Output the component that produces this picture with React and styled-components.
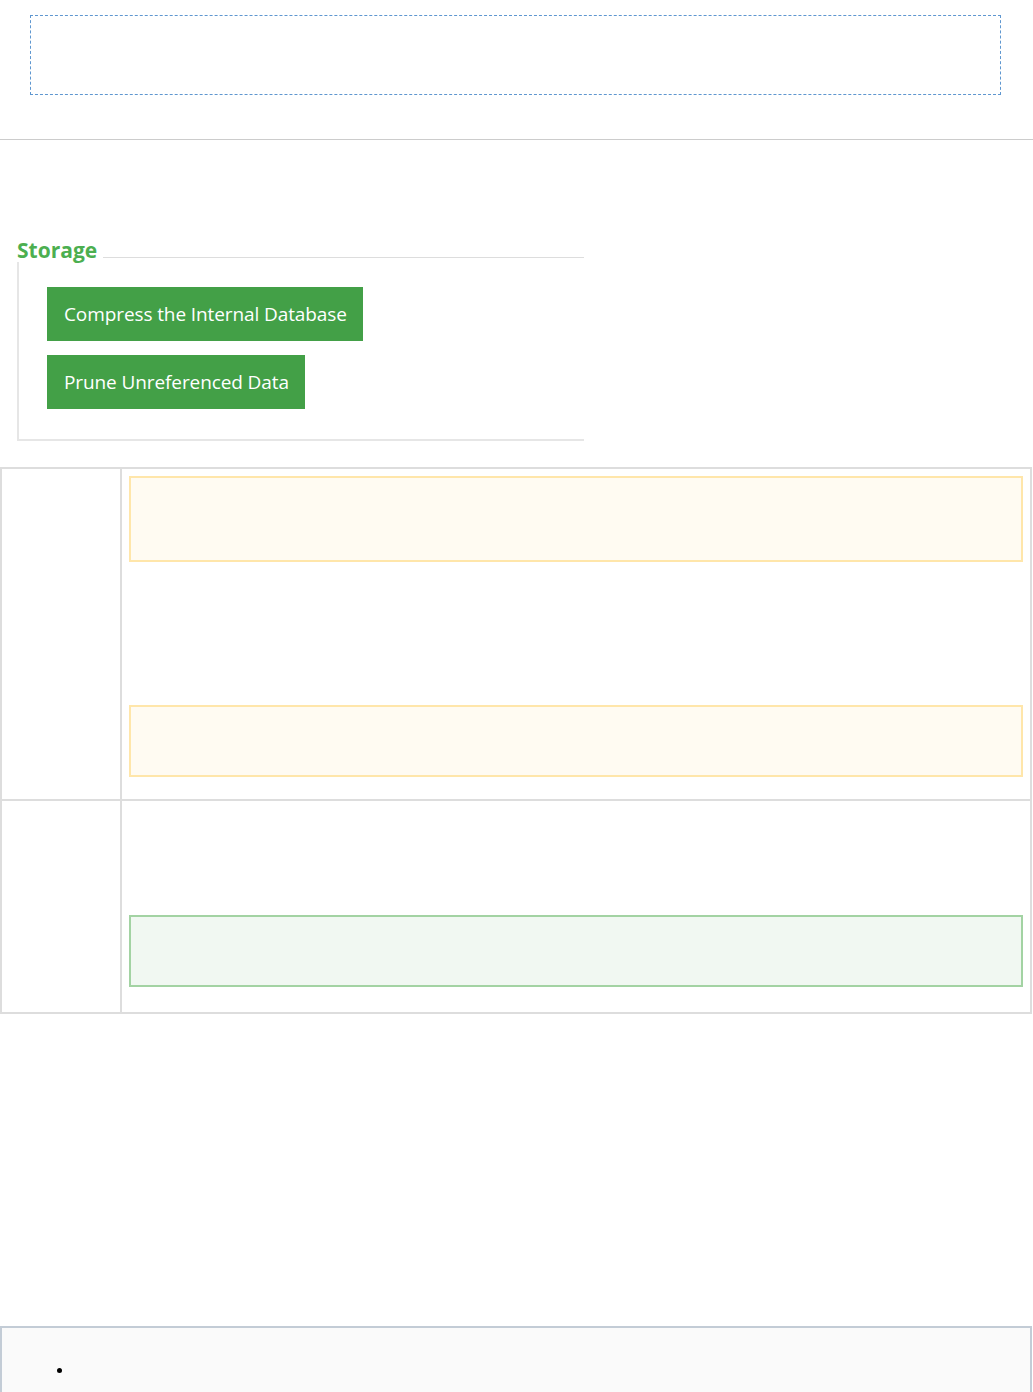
import styled, { createGlobalStyle } from "styled-components";

const GlobalStyle = createGlobalStyle`
  html, body {
    margin: 0;
    padding: 0;
    background: #ffffff;
    font-family: "Open Sans", "Liberation Sans", sans-serif;
    color: #333333;
  }
`;

const Page = styled.div`
  width: 1033px;
`;

const TopSection = styled.section`
  padding: 15px 32px 0 30px;
  height: 124px;
  border-bottom: 1px solid #cccccc;
`;

const DashedBox = styled.div`
  height: 78px;
  border: 1px dashed #5f97d0;
`;

const Fieldset = styled.section`
  width: 567px;
  margin: 100px 0 0 17px;
`;

const LegendRow = styled.div`
  display: flex;
  align-items: flex-end;
`;

const Legend = styled.span`
  font-size: 21px;
  line-height: 20px;
  font-weight: 700;
  color: #4caf50;
`;

const LegendRule = styled.div`
  flex: 1;
  height: 1px;
  margin: 0 0 2px 6px;
  background: #dddddd;
`;

const FieldBody = styled.div`
  margin-top: 2px;
  padding: 25px 0 30px 28px;
  border-left: 2px solid #e6e6e6;
  border-bottom: 2px solid #e6e6e6;
  display: flex;
  flex-direction: column;
  align-items: flex-start;
  gap: 14px;
`;

const Button = styled.button`
  height: 54px;
  padding: 0 16px 0 17px;
  border: none;
  border-radius: 0;
  background: #43a047;
  color: #ffffff;
  font-family: "Open Sans", "Liberation Sans", sans-serif;
  font-size: 19px;
  letter-spacing: -0.1px;
  cursor: pointer;
`;

const Table = styled.div`
  margin-top: 26px;
  width: 1032px;
  box-sizing: border-box;
  display: grid;
  grid-template-columns: 120px 1fr;
  border-top: 2px solid #dddddd;
  border-left: 2px solid #dddddd;
`;

const Cell = styled.div`
  border-right: 2px solid #dddddd;
  border-bottom: 2px solid #dddddd;
  padding: ${(p) => (p.$wide ? `7px 7px ${p.$pb}px 7px` : "0")};
`;

const Notice = styled.div`
  height: ${(p) => p.$h}px;
  box-sizing: border-box;
  border: 2px solid ${(p) => (p.$kind === "success" ? "#a3d3a3" : "#ffe6aa")};
  background: ${(p) => (p.$kind === "success" ? "#f1f8f2" : "#fffbf2")};
`;

const Spacer = styled.div`
  height: ${(p) => p.$h}px;
`;

const Footer = styled.div`
  margin-top: 312px;
  width: 1032px;
  height: 120px;
  box-sizing: border-box;
  border: 2px solid #c3ccd6;
  background: #fafafa;
`;

const BulletList = styled.ul`
  margin: 33px 0 0 0;
  padding-left: 72px;
  font-size: 14px;
  line-height: 20px;
  color: #000000;
`;

export default function App() {
  return (
    <Page>
      <GlobalStyle />
      <TopSection>
        <DashedBox />
      </TopSection>

      <Fieldset>
        <LegendRow>
          <Legend>Storage</Legend>
          <LegendRule />
        </LegendRow>
        <FieldBody>
          <Button>Compress the Internal Database</Button>
          <Button>Prune Unreferenced Data</Button>
        </FieldBody>
      </Fieldset>

      <Table>
        <Cell />
        <Cell $wide $pb={22}>
          <Notice $h={86} />
          <Spacer $h={143} />
          <Notice $h={72} />
        </Cell>
        <Cell />
        <Cell $wide $pb={25}>
          <Spacer $h={107} />
          <Notice $h={72} $kind="success" />
        </Cell>
      </Table>

      <Footer>
        <BulletList>
          <li>&nbsp;</li>
        </BulletList>
      </Footer>
    </Page>
  );
}
